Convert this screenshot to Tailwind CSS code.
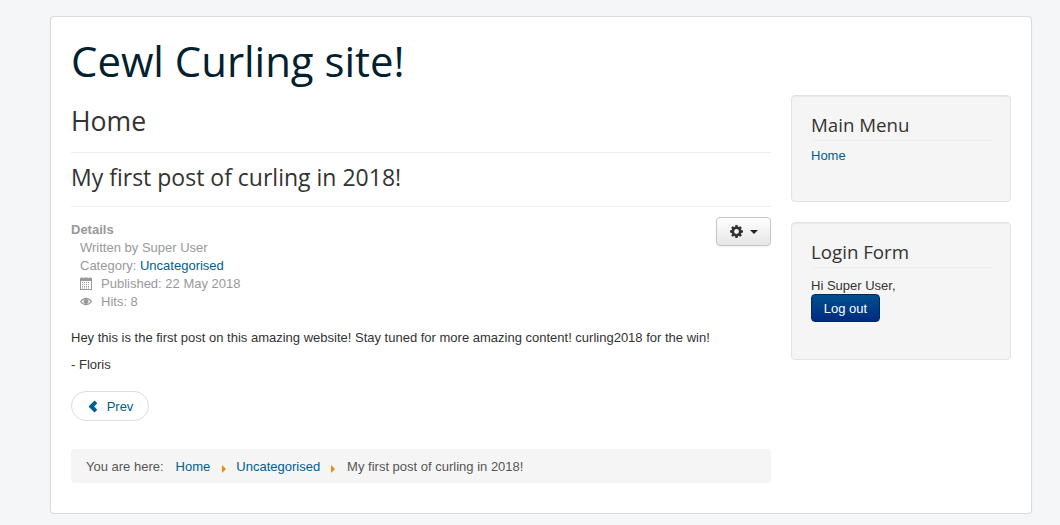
<!doctype html>
<html>
<head>
<meta charset="utf-8">
<script src="https://cdn.jsdelivr.net/npm/@tailwindcss/browser@4"></script>
</head>
<body class="h-[525px] overflow-hidden bg-[#f4f6f7] font-['Liberation_Sans',sans-serif] text-[13px] leading-[18px] text-[#333]">
<div class="ml-[50px] mt-4 h-[498px] w-[982px] rounded-[4px] border border-[#dcdcdc] bg-white p-5 shadow-[0_0_1px_rgba(0,0,0,0.1)]">
  <div class="h-[58px] font-['Open_Sans',sans-serif] text-[41.9px] leading-[48px] text-[#03202f]">Cewl Curling site!</div>
  <div class="flex gap-5">
    <main class="w-[700px] pt-[7px]">
      <h1 class="h-[36px] pt-[1px] font-['Open_Sans',sans-serif] text-[26.6px] leading-[36px] text-[#333]">Home</h1>
      <div class="mt-[14px] border-t border-[#eeeeee]"></div>
      <h2 class="mt-[11px] font-['Open_Sans',sans-serif] text-[23px] leading-[27px] text-[#333]">My first post of curling in 2018!</h2>
      <div class="mt-[15px] border-t border-[#eeeeee]"></div>
      <div class="relative mt-[14px] text-[#999]">
        <button class="absolute right-0 top-[-4px] flex h-[29px] w-[55px] items-center justify-center gap-[7px] rounded-[4px] border border-[#c5c5c5] bg-gradient-to-b from-white to-[#e6e6e6] shadow-[0_1px_2px_rgba(0,0,0,0.05)]">
          <svg width="13" height="13" viewBox="0 0 24 24" fill="#333"><path fill-rule="evenodd" d="M10 0h4l.6 3.100 1.800.8L19 2.100 21.900 5l-1.800 2.600.8 1.800L24 10v4l-3.100.6-.8 1.800 1.800 2.600-2.900 2.900-2.600-1.800-1.800.8L14 24h-4l-.6-3.100-1.800-.8L5 21.900 2.100 19l1.800-2.600-.8-1.800L0 14v-4l3.100-.6.8-1.800L2.100 5 5 2.100l2.600 1.800 1.800-.8L10 0zm2 7.500a4.500 4.500 0 1 0 0 9 4.500 4.500 0 0 0 0-9z"/></svg>
          <span class="h-0 w-0 border-x-[4px] border-t-[4px] border-x-transparent border-t-[#222]"></span>
        </button>
        <div class="font-bold">Details</div>
        <div class="pl-[9px]">Written by Super User</div>
        <div class="pl-[9px]">Category: <a class="text-[#005e8d]">Uncategorised</a></div>
        <div class="flex items-center pl-[9px]">
          <svg class="mb-[2px] mr-[9px]" width="12" height="13" viewBox="0 0 12 13" fill="none"><path d="M0 1h12v12H0z" fill="#999"/><path d="M1 4h10v8H1z" fill="#fff"/><path d="M2 1.500V0M5 1.500V0M7 1.500V0M10 1.500V0" stroke="#999"/><path d="M2 5.500h8M2 7.500h8M2 9.500h8M2 11h8" stroke="#999" stroke-dasharray="1 1"/></svg>
          <span>Published: 22 May 2018</span>
        </div>
        <div class="flex items-center pl-[9px]">
          <svg class="mb-[2px] mr-[9px]" width="12" height="13" viewBox="0 0 12 13"><path fill="#999" d="M0 6.500C1.500 3.900 3.600 2.700 6 2.700s4.500 1.200 6 3.800c-1.500 2.600-3.600 3.800-6 3.800S1.500 9.100 0 6.500z"/><path fill="#fff" d="M1.500 6.500C2.700 4.800 4.200 3.900 6 3.900s3.300.9 4.500 2.600C9.300 8.200 7.800 9.100 6 9.100S2.700 8.200 1.500 6.500z"/><circle cx="6" cy="6.500" r="2.500" fill="#999"/></svg>
          <span>Hits: 8</span>
        </div>
      </div>
      <p class="mt-[18px]">Hey this is the first post on this amazing website! Stay tuned for more amazing content! curling2018 for the win!</p>
      <p class="mt-[9px]">- Floris</p>
      <div class="mt-[17px]">
        <a class="flex h-[30px] w-[78px] items-center justify-center gap-[8px] rounded-[15px] border border-[#dddddd] bg-white pl-[1px] text-[#005e8d]">
          <svg width="11" height="13" viewBox="0 0 11 13" fill="#005e8d"><path d="M6.500 0.500 9.300 3.300 6.100 6.500 9.300 9.700 6.500 12.500 0.500 6.500z"/></svg>
          <span class="mt-[2px]">Prev</span>
        </a>
      </div>
      <nav class="mt-[28px] flex h-[34px] items-center rounded-[4px] bg-[#f5f5f5] pl-[15px] pt-[2px] text-[#555]">
        <span class="mr-[12px]">You are here:</span>
        <a class="text-[#005e8d]">Home</a>
        <span class="ml-[12px] mr-[10px] mt-[3px] h-0 w-0 border-y-[4px] border-l-[4px] border-y-transparent border-l-[#f08a0c]"></span>
        <a class="text-[#005e8d]">Uncategorised</a>
        <span class="ml-[11px] mr-[12px] mt-[3px] h-0 w-0 border-y-[4px] border-l-[4px] border-y-transparent border-l-[#f08a0c]"></span>
        <span>My first post of curling in 2018!</span>
      </nav>
    </main>
    <aside class="w-[220px]">
      <div class="h-[107px] rounded-[4px] border border-[#e3e3e3] bg-[#f5f5f5] px-[19px] pt-[17px] shadow-[inset_0_1px_1px_rgba(0,0,0,0.05)]">
        <h3 class="border-b border-[#eeeeee] pb-[3px] font-['Open_Sans',sans-serif] text-[18.72px] leading-[24px] text-[#333]">Main Menu</h3>
        <a class="mt-[6px] block text-[#005e8d]">Home</a>
      </div>
      <div class="mt-[20px] h-[138px] rounded-[4px] border border-[#e3e3e3] bg-[#f5f5f5] px-[19px] pt-[17px] shadow-[inset_0_1px_1px_rgba(0,0,0,0.05)]">
        <h3 class="border-b border-[#eeeeee] pb-[3px] font-['Open_Sans',sans-serif] text-[18.72px] leading-[24px] text-[#333]">Login Form</h3>
        <div class="mt-[9px]">Hi Super User,</div>
        <button class="-mt-[1px] flex h-[28px] w-[69px] items-center justify-center rounded-[4px] border border-[#002b5c] bg-gradient-to-b from-[#004f8f] to-[#002a80] pt-[2px] text-white">Log out</button>
      </div>
    </aside>
  </div>
</div>
</body>
</html>
